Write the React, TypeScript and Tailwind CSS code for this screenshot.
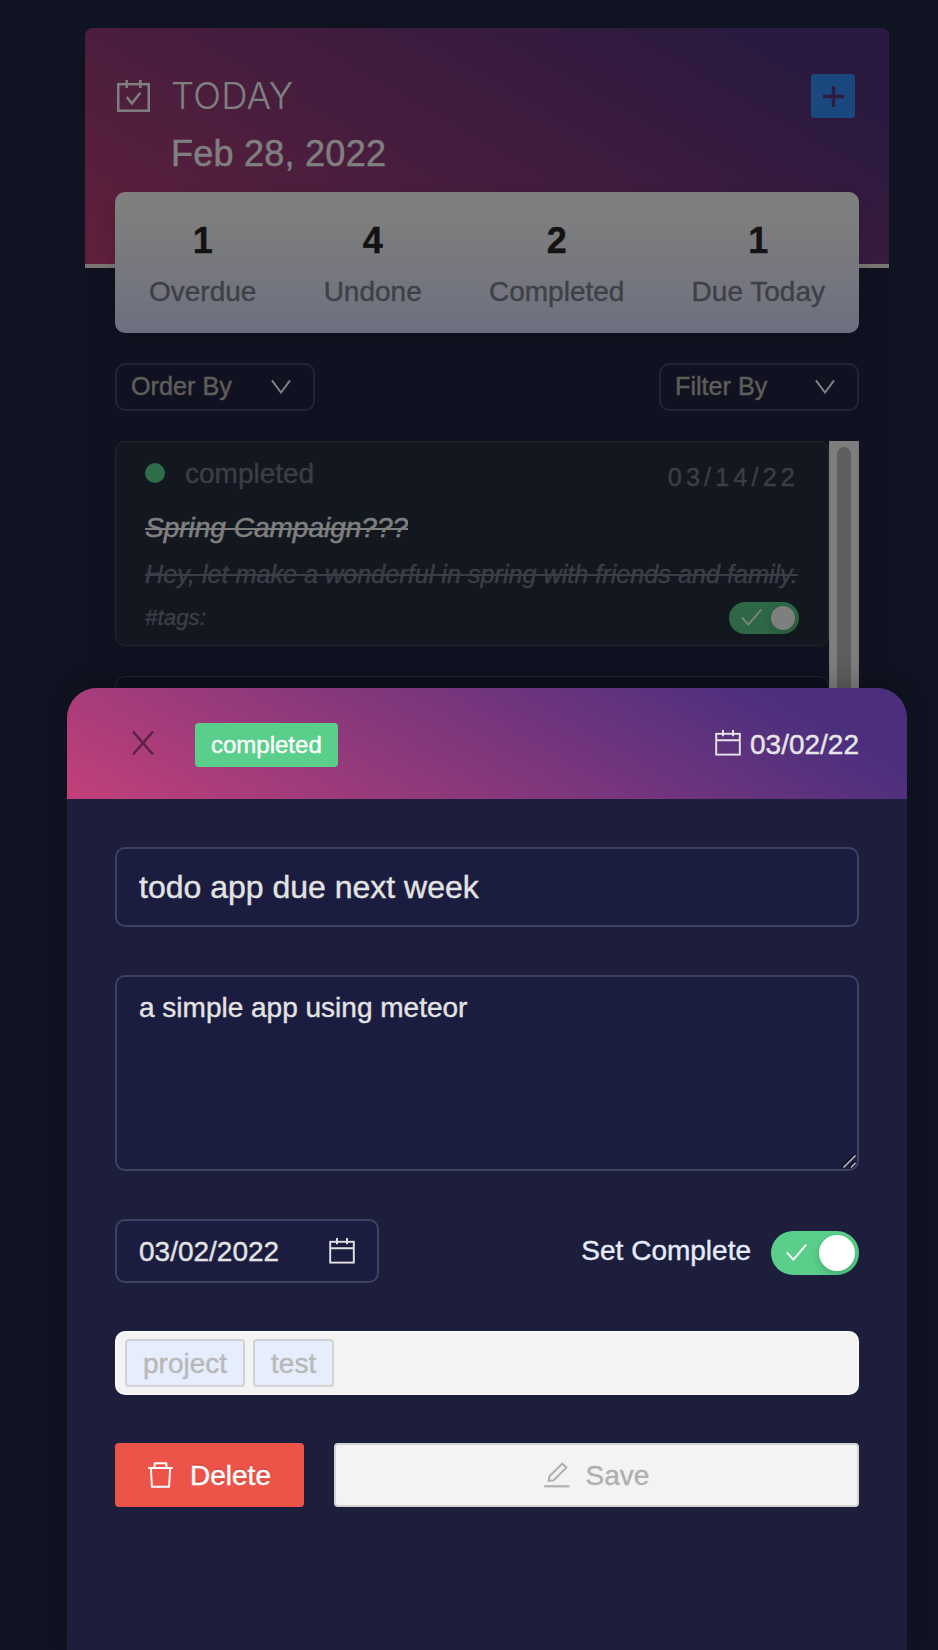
import React from "react";

type IconProps = { className?: string };

function CalendarIcon({ className = "" }: IconProps) {
  return (
    <svg
      className={`h-[26px] w-[26px] shrink-0 ${className}`}
      viewBox="0 0 26 26"
      fill="none"
      stroke="currentColor"
      strokeWidth="1.9"
    >
      <rect x="1.2" y="3.800" width="23.600" height="20.800" />
      <path d="M1 10.200H25M8 0V6.300M18 0V6.300" />
    </svg>
  );
}

function CarryOutIcon({ className = "" }: IconProps) {
  return (
    <svg
      className={`h-8 w-[33px] shrink-0 ${className}`}
      viewBox="0 0 33 32"
      fill="none"
      stroke="currentColor"
      strokeWidth="2.5"
    >
      <rect x="1.250" y="4.200" width="30.500" height="26.500" />
      <path d="M9.700 0V8M23.300 0V8M9.800 17L14.800 23.500L23.300 12.800" />
    </svg>
  );
}

function CheckIcon({ className = "" }: IconProps) {
  return (
    <svg
      className={`h-[17px] w-[21px] shrink-0 ${className}`}
      viewBox="0 0 21 17"
      fill="none"
      stroke="currentColor"
      strokeWidth="1.900"
    >
      <path d="M0.800 8.300L7.400 15.600L20.200 0.600" />
    </svg>
  );
}

function CloseIcon({ className = "" }: IconProps) {
  return (
    <svg
      className={`h-6 w-[22px] shrink-0 ${className}`}
      viewBox="0 0 22 24"
      fill="none"
      stroke="currentColor"
      strokeWidth="2.500"
    >
      <path d="M1 0.500L21 23.500M21 0.500L1 23.500" />
    </svg>
  );
}

function DownIcon({ className = "" }: IconProps) {
  return (
    <svg
      className={`h-3.5 w-5 shrink-0 ${className}`}
      viewBox="0 0 20 14"
      fill="none"
      stroke="currentColor"
      strokeWidth="2"
    >
      <path d="M0.900 0.300L10 12.500L19.100 0.300" />
    </svg>
  );
}

function PlusIcon({ className = "" }: IconProps) {
  return (
    <svg
      className={`size-[21px] shrink-0 ${className}`}
      viewBox="0 0 21 21"
      fill="none"
      stroke="currentColor"
      strokeWidth="3.500"
    >
      <path d="M10.500 0V21M0 10.500H21" />
    </svg>
  );
}

function TrashIcon({ className = "" }: IconProps) {
  return (
    <svg
      className={`h-[26px] w-[25px] shrink-0 ${className}`}
      viewBox="0 0 25 26"
      fill="none"
      stroke="currentColor"
      strokeWidth="1.900"
      strokeLinejoin="round"
    >
      <path d="M6.600 6V1.200H18.400V6M0.300 6H24.700M2.900 6L3.900 24.700H21.100L22.100 6" />
    </svg>
  );
}

function EditIcon({ className = "" }: IconProps) {
  return (
    <svg
      className={`size-[26px] shrink-0 ${className}`}
      viewBox="0 0 26 26"
      fill="none"
      stroke="currentColor"
      strokeWidth="2"
    >
      <path d="M4.700 18.900L5.500 14.200L18.200 1.700L22.400 5.600L9.600 18.200Z" />
      <path d="M0.200 24.300H25.500" strokeWidth="2.200" />
    </svg>
  );
}

const stats = [
  { value: 1, label: "Overdue" },
  { value: 4, label: "Undone" },
  { value: 2, label: "Completed" },
  { value: 1, label: "Due Today" },
];

function Select({ label }: { label: string }) {
  return (
    <button className="flex h-12 w-[200px] items-center justify-between rounded-[10px] border-2 border-[#454864] bg-[#222442] pr-[22px] pl-[14px] text-[25.2px] text-[#bfbbb3]">
      <span className="pb-px">{label}</span>
      <DownIcon className="text-white" />
    </button>
  );
}

function SmallSwitch() {
  return (
    <div className="flex h-8 w-[70px] items-center justify-between rounded-full bg-[#5acf8b] pr-1 pl-3">
      <CheckIcon className="mb-0.5 text-white" />
      <div className="size-6 rounded-full bg-white shadow-[0_4px_8px_rgba(0,35,11,0.2)]" />
    </div>
  );
}

function TodoCard() {
  return (
    <div className="flex h-[205px] flex-col rounded-[10px] border border-[#4a4e5c] bg-[#262e3e] px-[29px] pt-[11px] text-[#787b8c]">
      <div className="flex h-11 items-center justify-between">
        <div className="flex items-center gap-5">
          <span className="mb-1 size-5 rounded-full bg-[#5fdb94]" />
          <span className="mb-0.5 text-[28px] leading-[44px]">completed</span>
        </div>
        <span className="pt-1.5 text-[25.2px] tracking-[4.15px]">03/14/22</span>
      </div>
      <div className="mt-[9px] w-[263px] overflow-hidden text-[28px] leading-[44px] whitespace-nowrap text-white italic line-through decoration-2">
        Spring Campaign???
      </div>
      <div className="mt-1 text-[25.2px] leading-[40px] whitespace-nowrap italic line-through decoration-2">
        Hey, let make a wonderful in spring with friends and family.
      </div>
      <div className="mt-1.5 flex items-center justify-between">
        <span className="text-[22.4px] leading-9 italic">#tags:</span>
        <SmallSwitch />
      </div>
    </div>
  );
}

function TodoBoard() {
  return (
    <main className="mx-auto mt-7 flex h-[1590px] w-[804px] flex-col overflow-hidden rounded-lg bg-[#222543]">
      <header className="flex h-[240px] shrink-0 flex-col border-b-4 border-[#f2ede6] bg-[linear-gradient(30deg,#c24079_0%,#56347f_86%)] px-[30px] pt-[46px] text-white">
        <div className="flex h-11 items-center justify-between pr-1">
          <div className="flex items-center">
            <CarryOutIcon className="ml-0.5" />
            <h1 className="ml-[21px] font-['Inter','Liberation_Sans',sans-serif] text-[36.5px] font-light tracking-[0.2px] [-webkit-text-stroke:0]">
              TODAY
            </h1>
          </div>
          <button className="flex size-11 items-center justify-center rounded-sm bg-[#368fff] text-[#5b3a80]">
            <PlusIcon />
          </button>
        </div>
        <p className="mt-3 ml-14 text-4xl leading-[48px] tracking-[0.25px]">Feb 28, 2022</p>
      </header>
      <section className="relative mx-[30px] -mt-[76px] flex h-[141px] shrink-0 justify-between rounded-[10px] bg-[linear-gradient(180deg,#ffffff_0%,#fcfcfc_20%,#dbdfff_100%)] px-[34px] pt-6 shadow-[0_6px_20px_rgba(0,0,0,0.15)]">
        {stats.map((s) => (
          <div key={s.label} className="flex flex-col items-center">
            <span className="text-4xl leading-[50px] font-bold text-[#262626]">{s.value}</span>
            <span className="text-[28px] leading-[52px] text-[#7d808f]">{s.label}</span>
          </div>
        ))}
      </section>
      <div className="mx-[30px] mt-[30px] flex justify-between">
        <Select label="Order By" />
        <Select label="Filter By" />
      </div>
      <section className="mx-[30px] mt-[30px] flex flex-1">
        <div className="flex flex-1 flex-col gap-[30px]">
          <TodoCard />
          <div className="h-[205px] rounded-[10px] border border-[#484b66] bg-[#1f203e]" />
        </div>
        <div className="w-[30px] border-x border-[#ededed] bg-[#fcfcfc] px-[7px] pt-1.5">
          <div className="h-[700px] rounded-lg bg-[#bdbdbd]" />
        </div>
      </section>
    </main>
  );
}

function TodoDrawer() {
  return (
    <aside className="absolute top-[688px] left-[67px] flex h-[962px] w-[840px] flex-col overflow-hidden rounded-t-[30px] bg-[#1c1e3c] shadow-[0_-8px_24px_rgba(0,0,0,0.18)]">
      <header className="flex h-[111px] shrink-0 items-center justify-between bg-[linear-gradient(30deg,#c24079_0%,#4b2f7e_86%)] px-12">
        <div className="flex items-center">
          <CloseIcon className="mb-0.5 ml-[17px] text-black/45" />
          <span className="mt-[3px] ml-[41px] flex h-11 items-center rounded bg-[#5acf8b] px-4 text-2xl text-white">
            completed
          </span>
        </div>
        <div className="flex items-center gap-[9px] text-[28px] text-[#e6e6e6]">
          <CalendarIcon className="mb-0.5" />
          <span className="pt-0.5">03/02/22</span>
        </div>
      </header>
      <div className="flex flex-col px-12 pt-12 text-[28px] text-[#e3e3e3]">
        <div className="flex h-20 items-center rounded-[10px] border-2 border-[#3f4162] bg-[#1b1d40] px-[22px] text-[32px]">
          todo app due next week
        </div>
        <div className="relative mt-12 h-[196px] rounded-[10px] border-2 border-[#3f4162] bg-[#1b1d40] px-[22px] pt-[9px] leading-[44px]">
          a simple app using meteor
          <svg
            className="absolute right-0 bottom-0 size-4"
            viewBox="0 0 16 16"
            fill="none"
            strokeWidth="1.6"
          >
            <path d="M1 14L13 2M8.500 14L13 9.500" stroke="#0a0a14" />
            <path d="M2.500 14.500L14.500 2.500M10 14.500L14.500 10" stroke="#b8b8c0" />
          </svg>
        </div>
        <div className="mt-12 flex items-center justify-between">
          <div className="flex h-16 w-[264px] items-center justify-between rounded-[10px] border-2 border-[#3f4162] bg-[#1b1d40] px-[22px]">
            <span className="pt-0.5">03/02/2022</span>
            <CalendarIcon />
          </div>
          <div className="flex items-center gap-5 text-[#e6ebff]">
            <span>Set Complete</span>
            <div className="mt-1 flex h-11 w-[88px] items-center justify-between rounded-full bg-[#5acf8b] pr-1 pl-[15px] text-white">
              <CheckIcon className="mb-0.5" />
              <div className="size-9 rounded-full bg-white shadow-[0_4px_8px_rgba(0,35,11,0.2)]" />
            </div>
          </div>
        </div>
        <div className="mt-12 flex h-16 items-center gap-2 rounded-[10px] border-2 border-[#f8f8f8] bg-[#f3f3f3] px-2 text-[#b8b8b8]">
          {["project", "test"].map((tag) => (
            <span
              key={tag}
              className="flex h-12 items-center rounded border-2 border-[#d2d2d2] bg-[#e6edfd] px-4 pt-0.5"
            >
              {tag}
            </span>
          ))}
        </div>
        <div className="mt-12 flex h-16 gap-[30px]">
          <button className="flex w-[189px] items-center justify-center gap-[17px] rounded bg-[#ec5449] text-white [text-shadow:0_-2px_0_rgba(0,0,0,0.12)]">
            <TrashIcon />
            <span className="pt-0.5">Delete</span>
          </button>
          <button className="flex flex-1 items-center justify-center gap-4 rounded border-2 border-[#d2d2d2] bg-[#f3f3f3] text-[#b0b0b0]">
            <EditIcon />
            <span className="pt-0.5">Save</span>
          </button>
        </div>
      </div>
    </aside>
  );
}

export default function App() {
  return (
    <div className="relative flex h-[1650px] w-[938px] flex-col overflow-hidden bg-[#202642] pl-9 font-['Liberation_Sans',Arial,sans-serif] [-webkit-text-stroke:0.4px]">
      <TodoBoard />
      <div className="absolute inset-0 bg-black/50" />
      <TodoDrawer />
    </div>
  );
}
